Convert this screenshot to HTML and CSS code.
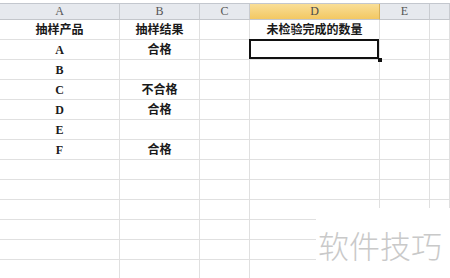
FILE: index.html
```html
<!DOCTYPE html>
<html lang="zh-CN">
<head>
    <meta charset="UTF-8">
    <meta name="viewport" content="width=device-width, initial-scale=1.0">
    <title>抽样检验</title>
    <link rel="stylesheet" href="styles.css">
</head>
<body>
    <div class="formula-edge"></div>
    <div class="sheet">
        <div class="grid">
            <div class="col-head">A</div>
            <div class="col-head">B</div>
            <div class="col-head">C</div>
            <div class="col-head active">D</div>
            <div class="col-head">E</div>
            <div class="col-head"></div>

            <div class="cell">抽样产品</div>
            <div class="cell">抽样结果</div>
            <div class="cell"></div>
            <div class="cell">未检验完成的数量</div>
            <div class="cell"></div>
            <div class="cell"></div>

            <div class="cell">A</div>
            <div class="cell">合格</div>
            <div class="cell"></div>
            <div class="cell selected"></div>
            <div class="cell"></div>
            <div class="cell"></div>

            <div class="cell">B</div>
            <div class="cell"></div>
            <div class="cell"></div>
            <div class="cell"></div>
            <div class="cell"></div>
            <div class="cell"></div>

            <div class="cell">C</div>
            <div class="cell">不合格</div>
            <div class="cell"></div>
            <div class="cell"></div>
            <div class="cell"></div>
            <div class="cell"></div>

            <div class="cell">D</div>
            <div class="cell">合格</div>
            <div class="cell"></div>
            <div class="cell"></div>
            <div class="cell"></div>
            <div class="cell"></div>

            <div class="cell">E</div>
            <div class="cell"></div>
            <div class="cell"></div>
            <div class="cell"></div>
            <div class="cell"></div>
            <div class="cell"></div>

            <div class="cell">F</div>
            <div class="cell">合格</div>
            <div class="cell"></div>
            <div class="cell"></div>
            <div class="cell"></div>
            <div class="cell"></div>

            <div class="cell"></div><div class="cell"></div><div class="cell"></div><div class="cell"></div><div class="cell"></div><div class="cell"></div>
            <div class="cell"></div><div class="cell"></div><div class="cell"></div><div class="cell"></div><div class="cell"></div><div class="cell"></div>
            <div class="cell"></div><div class="cell"></div><div class="cell"></div><div class="cell"></div><div class="cell"></div><div class="cell"></div>
            <div class="cell"></div><div class="cell"></div><div class="cell"></div><div class="cell"></div><div class="cell"></div><div class="cell"></div>
            <div class="cell"></div><div class="cell"></div><div class="cell"></div><div class="cell"></div><div class="cell"></div><div class="cell"></div>
            <div class="cell"></div><div class="cell"></div><div class="cell"></div><div class="cell"></div><div class="cell"></div><div class="cell"></div>
        </div>
        <div class="watermark">软件技巧</div>
    </div>
</body>
</html>
```

FILE: styles.css
```css
body {
    margin: 0;
    padding: 0;
    background-color: #fff;
    font-family: "Liberation Serif", "Noto Sans CJK SC", serif;
    overflow: hidden;
}
.formula-edge {
    height: 3px;
    border-bottom: 1px solid #c3c7ce;
    background-color: #fff;
}
.sheet {
    position: relative;
}
.grid {
    display: grid;
    grid-template-columns: 120px 80px 50px 130px 50px 1fr;
    grid-template-rows: 16px;
    grid-auto-rows: 20px;
}
.col-head {
    box-sizing: border-box;
    background-color: #e6e9ee;
    border-right: 1px solid #c9ccd1;
    border-bottom: 1px solid #c3c6cb;
    color: #555;
    font-size: 12px;
    line-height: 15px;
    text-align: center;
}
.col-head.active {
    background: linear-gradient(#f9de97, #f3c862);
    border-right-color: #d9b25a;
    color: #4a4a4a;
}
.cell {
    box-sizing: border-box;
    border-right: 1px solid #e0e0e0;
    border-bottom: 1px solid #e0e0e0;
    padding-top: 2px;
    font-size: 12px;
    font-weight: 600;
    line-height: 17px;
    text-align: center;
    color: #1a1a1a;
}
.selected {
    position: relative;
}
.selected::after {
    content: "";
    position: absolute;
    top: -1px;
    left: -1px;
    right: 0;
    bottom: 0;
    border: 2px solid #111;
}
.selected::before {
    content: "";
    position: absolute;
    right: -3px;
    bottom: -3px;
    width: 4px;
    height: 4px;
    background-color: #111;
    z-index: 1;
}
.watermark {
    position: absolute;
    left: 316px;
    top: 204px;
    right: 0;
    bottom: -10px;
    background-color: #fff;
    color: #c9c9c9;
    font-family: "Noto Sans CJK SC", sans-serif;
    font-weight: 300;
    font-size: 31px;
    line-height: 36px;
    padding: 19px 0 0 2px;
}
```
